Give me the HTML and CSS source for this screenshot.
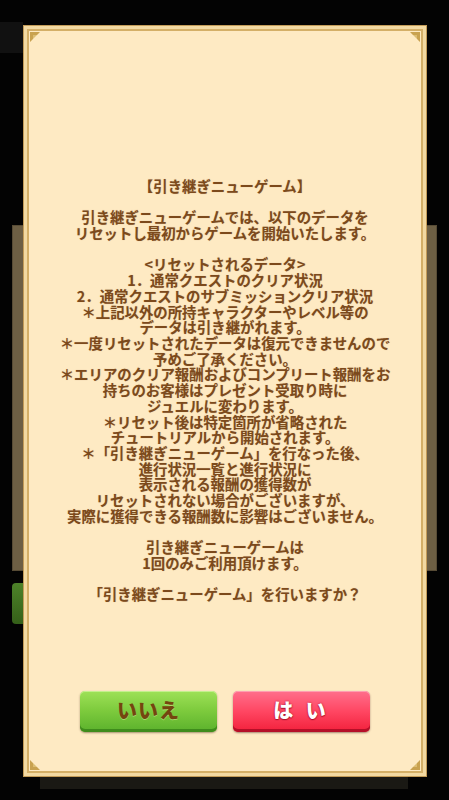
FILE: index.html
```html
<!DOCTYPE html>
<html lang="ja">
<head>
<meta charset="utf-8">
<title>引き継ぎニューゲーム</title>
<link rel="stylesheet" href="styles.css">
</head>
<body>
<div class="stage">
  <div class="side side-left">
    <div class="dim-box"></div>
    <div class="rail rail-left"></div>
    <div class="tab-green"></div>
  </div>
  <div class="center">
    <div class="panel">
      <div class="frame">
        <svg class="orn orn-tl" viewBox="0 0 10 10" width="10" height="10"><path d="M0 0H10L7 3H3V7L0 10Z" fill="#c9a24f"/><path d="M3 3H7L3 7Z" fill="#dcbd72"/></svg>
        <svg class="orn orn-tr" viewBox="0 0 10 10" width="10" height="10"><path d="M0 0H10L7 3H3V7L0 10Z" fill="#c9a24f"/><path d="M3 3H7L3 7Z" fill="#dcbd72"/></svg>
        <svg class="orn orn-bl" viewBox="0 0 10 10" width="10" height="10"><path d="M0 0H10L7 3H3V7L0 10Z" fill="#c9a24f"/><path d="M3 3H7L3 7Z" fill="#dcbd72"/></svg>
        <svg class="orn orn-br" viewBox="0 0 10 10" width="10" height="10"><path d="M0 0H10L7 3H3V7L0 10Z" fill="#c9a24f"/><path d="M3 3H7L3 7Z" fill="#dcbd72"/></svg>
        <div class="message">
          <p>【引き継ぎニューゲーム】</p>
          <p>引き継ぎニューゲームでは、以下のデータを<br>リセットし最初からゲームを開始いたします。</p>
          <p>&lt;リセットされるデータ&gt;<br>1．通常クエストのクリア状況<br>2．通常クエストのサブミッションクリア状況<br>＊上記以外の所持キャラクターやレベル等の<br>データは引き継がれます。<br>＊一度リセットされたデータは復元できませんので<br>予めご了承ください。<br>＊エリアのクリア報酬およびコンプリート報酬をお<br>持ちのお客様はプレゼント受取り時に<br>ジュエルに変わります。<br>＊リセット後は特定箇所が省略された<br>チュートリアルから開始されます。<br>＊「引き継ぎニューゲーム」を行なった後、<br>進行状況一覧と進行状況に<br>表示される報酬の獲得数が<br>リセットされない場合がございますが、<br>実際に獲得できる報酬数に影響はございません。</p>
          <p>引き継ぎニューゲームは<br>1回のみご利用頂けます。</p>
          <p>「引き継ぎニューゲーム」を行いますか？</p>
        </div>
        <div class="actions">
          <button class="btn btn-no">いいえ</button>
          <button class="btn btn-yes">は い</button>
        </div>
      </div>
    </div>
    <div class="panel-shadow"></div>
  </div>
  <div class="side side-right">
    <div class="rail rail-right"></div>
  </div>
</div>
</body>
</html>
```
FILE: styles.css
```css
html, body {
  margin: 0;
  padding: 0;
  background: #030303;
}
.stage {
  width: 449px;
  height: 800px;
  display: flex;
  overflow: hidden;
  font-family: "Noto Sans CJK JP", "Noto Sans", sans-serif;
}
.side {
  display: flex;
  flex-direction: column;
}
.side-left {
  width: 23px;
}
.side-right {
  width: 22px;
}
.dim-box {
  margin-top: 22px;
  height: 31px;
  width: 23px;
  background: #111111;
}
.rail {
  box-sizing: border-box;
  height: 346px;
  width: 11px;
  background: #6d5f44;
  border: 1px solid #574b35;
}
.rail-left {
  margin-top: 172px;
  margin-left: 12px;
  border-right: none;
}
.rail-right {
  margin-top: 225px;
  width: 10px;
  border-left: none;
}
.tab-green {
  margin-top: 12px;
  margin-left: 12px;
  width: 11px;
  height: 41px;
  background: linear-gradient(#4d8229, #356019);
  border-radius: 4px 0 0 4px;
}
.center {
  width: 404px;
  display: flex;
  flex-direction: column;
}
.panel {
  box-sizing: border-box;
  margin-top: 25px;
  height: 752px;
  border: 1px solid #c29b58;
  padding: 3px;
  background: #f2d9a2;
}
.panel-shadow {
  margin: 0 19px 0 17px;
  height: 12px;
  background: #1a1914;
}
.frame {
  box-sizing: border-box;
  height: 100%;
  border: 2px solid #d4af67;
  background: #feeac3;
  position: relative;
  display: flex;
  flex-direction: column;
}
.orn {
  position: absolute;
}
.orn-tl { left: 1px; top: 1px; }
.orn-tr { right: 1px; top: 1px; transform: scaleX(-1); }
.orn-bl { left: 1px; bottom: 1px; transform: scaleY(-1); }
.orn-br { right: 1px; bottom: 1px; transform: scale(-1, -1); }
.message {
  margin-top: 147px;
  text-align: center;
  color: #7c4a1c;
  font-weight: 700;
  font-size: 14.4px;
  line-height: 15.7px;
  text-shadow: 0 0 1px rgba(124, 74, 28, 0.35);
}
.message p {
  margin: 0 0 15.7px;
}
.message p:last-child {
  margin-bottom: 0;
}
.actions {
  margin-top: auto;
  margin-bottom: 39px;
  display: flex;
  justify-content: center;
  gap: 16px;
}
.btn {
  box-sizing: border-box;
  width: 137px;
  height: 41px;
  border: none;
  border-radius: 5px;
  font-family: "Noto Sans CJK JP", "Noto Sans", sans-serif;
  font-weight: 900;
  font-size: 20px;
  line-height: 38px;
  padding: 0 0 3px;
  letter-spacing: 1px;
}
.btn-no {
  color: #74450f;
  background: linear-gradient(#9ee158 0%, #7fcc3e 45%, #5bb12c 100%);
  box-shadow: inset 0 -3px 0 #3f8c1c, inset 0 1px 0 #c4f08e, 0 1px 2px rgba(60, 40, 10, 0.45);
  text-shadow: 0 1px 0 rgba(255, 255, 200, 0.35);
}
.btn-yes {
  color: #ffffff;
  background: linear-gradient(#ff6f8c 0%, #ff4662 50%, #f2203b 100%);
  box-shadow: inset 0 -3px 0 #b50f28, inset 0 1px 0 #ff9fb2, 0 1px 2px rgba(60, 10, 10, 0.45);
  text-shadow: 0 0 2px #a8122c, 0 1px 1px #a8122c;
  letter-spacing: 4px;
}
```
